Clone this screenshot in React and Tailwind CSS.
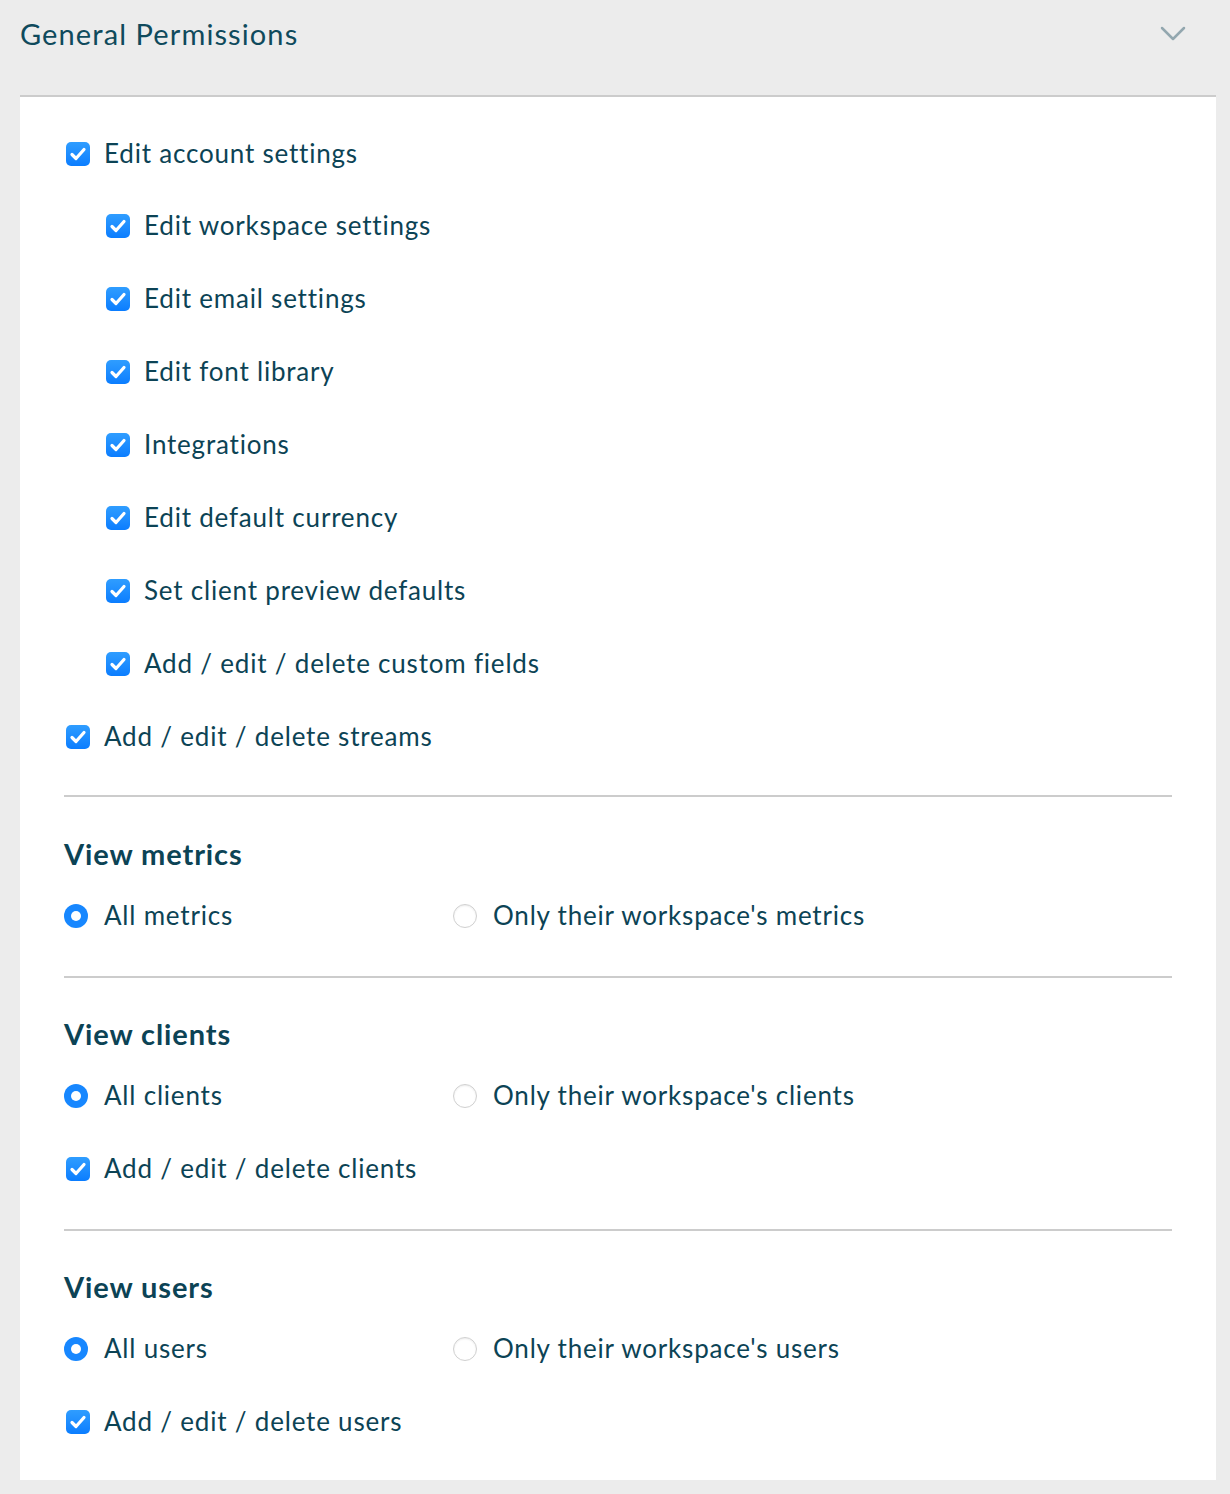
import React, { useState } from 'react'

const font = { fontFamily: 'Lato, "Open Sans", sans-serif' }

function Checkbox({ checked, onChange }){
  return (
    <button type="button" onClick={onChange}
      className={`w-6 h-6 rounded-[5px] flex items-center justify-center shrink-0 ${checked ? 'bg-gradient-to-b from-[#2f9dff] to-[#0a7dff]' : 'bg-white border border-[#c8c8c8]'}`}>
      {checked && (
        <svg width="24" height="24" viewBox="0 0 24 24" fill="none">
          <path d="M6 12.5l4 4L18 7.5" stroke="white" strokeWidth="3.2" strokeLinecap="round" strokeLinejoin="round" />
        </svg>
      )}
    </button>
  )
}

function Radio({ checked, onChange }){
  return (
    <button type="button" onClick={onChange}
      className={`w-6 h-6 rounded-full flex items-center justify-center shrink-0 ${checked ? 'bg-[#1787ff]' : 'bg-white border border-[#d0d0d0] shadow-[inset_0_1px_2px_rgba(0,0,0,0.08)]'}`}>
      {checked && <span className="w-[10px] h-[10px] rounded-full bg-white" />}
    </button>
  )
}

function CheckRow({ label, indent, first }){
  const [on, setOn] = useState(true)
  return (
    <div className={`flex items-center gap-[14px] ${first ? 'h-[71px]' : 'h-[73px]'} ${indent ? 'pl-[42px]' : 'pl-[2px]'}`}>
      <Checkbox checked={on} onChange={()=>setOn(!on)} />
      <span className="text-[26px] tracking-[0.8px] text-[#0c4355]">{label}</span>
    </div>
  )
}

function RadioRow({ options }){
  const [sel, setSel] = useState(0)
  return (
    <div className="flex items-center h-[73px] mt-[8px]">
      {options.map((o,i)=>(
        <div key={o} className={`flex items-center gap-[16px] ${i === 0 ? 'w-[389px]' : ''}`}>
          <Radio checked={sel === i} onChange={()=>setSel(i)} />
          <span className="text-[26px] tracking-[0.8px] text-[#0c4355]">{o}</span>
        </div>
      ))}
    </div>
  )
}

function Section({ title, options, extra, tight }){
  return (
    <div className={tight ? 'pt-[39px]' : 'pt-[40px]'}>
      <h3 className="h-[34px] flex items-center text-[29px] tracking-[0.9px] font-bold text-[#0c4355]">{title}</h3>
      <RadioRow options={options} />
      {extra && <CheckRow label={extra} />}
    </div>
  )
}

export default function App(){
  const [open, setOpen] = useState(true)
  return (
    <div className="min-h-[1494px] bg-[#ececec] pb-[14px]" style={font}>
      <div className="h-[95px] flex items-start justify-between pl-[20px] pr-[44px] pt-[14px] cursor-pointer" onClick={()=>setOpen(!open)}>
        <h2 className="text-[29px] tracking-[1.1px] text-[#0f4a5c] leading-[40px]">General Permissions</h2>
        <svg width="26" height="16" viewBox="0 0 26 16" fill="none" className="mt-[12px]">
          <path d="M2 2l11 11L24 2" stroke="#93a7af" strokeWidth="2.5" strokeLinecap="round" strokeLinejoin="round" />
        </svg>
      </div>
      <div className="ml-[20px] mr-[14px] bg-white border-t-2 border-[#cccccc] px-[44px] pt-[21px] pb-[22px]">
        <CheckRow first label="Edit account settings" />
        <CheckRow indent label="Edit workspace settings" />
        <CheckRow indent label="Edit email settings" />
        <CheckRow indent label="Edit font library" />
        <CheckRow indent label="Integrations" />
        <CheckRow indent label="Edit default currency" />
        <CheckRow indent label="Set client preview defaults" />
        <CheckRow indent label="Add / edit / delete custom fields" />
        <CheckRow label="Add / edit / delete streams" />

        <div className="mt-[22px] h-[2px] bg-[#cccccc]" />
        <Section title="View metrics" options={['All metrics', "Only their workspace's metrics"]} />

        <div className="mt-[24px] h-[2px] bg-[#cccccc]" />
        <Section tight title="View clients" options={['All clients', "Only their workspace's clients"]} extra="Add / edit / delete clients" />

        <div className="mt-[24px] h-[2px] bg-[#cccccc]" />
        <Section tight title="View users" options={['All users', "Only their workspace's users"]} extra="Add / edit / delete users" />
      </div>
    </div>
  )
}
